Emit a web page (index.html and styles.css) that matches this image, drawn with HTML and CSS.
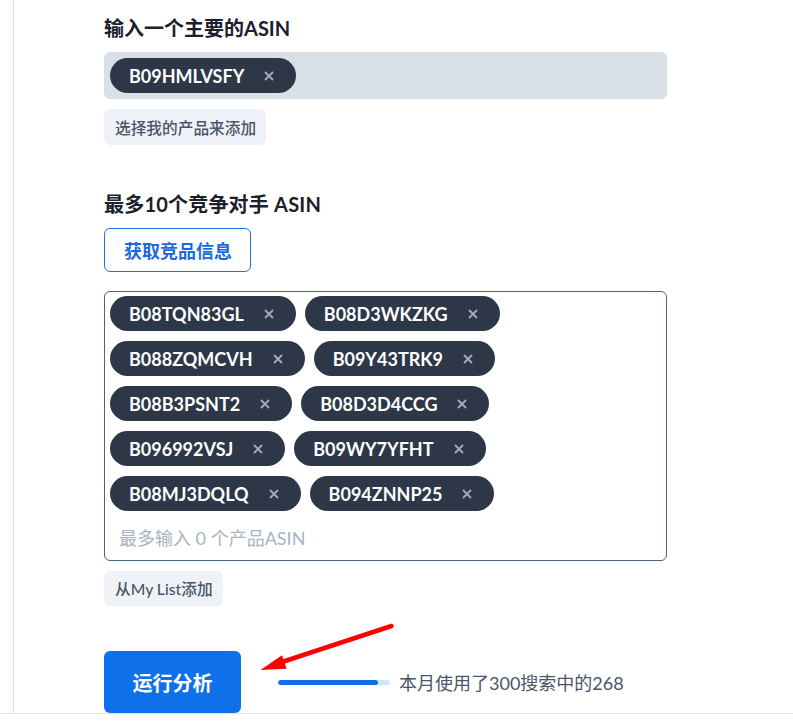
FILE: index.html
```html
<!DOCTYPE html>
<html lang="zh-CN">
<head>
<meta charset="utf-8">
<title>ASIN 分析</title>
<link rel="stylesheet" href="styles.css">
</head>
<body>
<div class="page">
  <div class="panel">
    <section class="field">
      <h2 class="label">输入一个主要的ASIN</h2>
      <div class="main-box">
        <span class="chip">B09HMLVSFY<svg class="x" viewBox="0 0 10 10"><path d="M1 1L9 9M9 1L1 9"/></svg></span>
      </div>
      <button class="ghost">选择我的产品来添加</button>
    </section>

    <section class="field competitors">
      <h2 class="label">最多10个竞争对手 ASIN</h2>
      <button class="outline">获取竞品信息</button>
      <div class="tag-box">
        <span class="chip">B08TQN83GL<svg class="x" viewBox="0 0 10 10"><path d="M1 1L9 9M9 1L1 9"/></svg></span>
        <span class="chip">B08D3WKZKG<svg class="x" viewBox="0 0 10 10"><path d="M1 1L9 9M9 1L1 9"/></svg></span>
        <span class="chip">B088ZQMCVH<svg class="x" viewBox="0 0 10 10"><path d="M1 1L9 9M9 1L1 9"/></svg></span>
        <span class="chip">B09Y43TRK9<svg class="x" viewBox="0 0 10 10"><path d="M1 1L9 9M9 1L1 9"/></svg></span>
        <span class="chip">B08B3PSNT2<svg class="x" viewBox="0 0 10 10"><path d="M1 1L9 9M9 1L1 9"/></svg></span>
        <span class="chip">B08D3D4CCG<svg class="x" viewBox="0 0 10 10"><path d="M1 1L9 9M9 1L1 9"/></svg></span>
        <span class="chip">B096992VSJ<svg class="x" viewBox="0 0 10 10"><path d="M1 1L9 9M9 1L1 9"/></svg></span>
        <span class="chip">B09WY7YFHT<svg class="x" viewBox="0 0 10 10"><path d="M1 1L9 9M9 1L1 9"/></svg></span>
        <span class="chip">B08MJ3DQLQ<svg class="x" viewBox="0 0 10 10"><path d="M1 1L9 9M9 1L1 9"/></svg></span>
        <span class="chip">B094ZNNP25<svg class="x" viewBox="0 0 10 10"><path d="M1 1L9 9M9 1L1 9"/></svg></span>
        <div class="placeholder">最多输入 0 个产品ASIN</div>
      </div>
      <button class="ghost small">从My List添加</button>
    </section>

    <div class="run-row">
      <button class="run">运行分析</button>
      <div class="bar"><div class="fill" style="width:89.3%"></div></div>
      <span class="usage">本月使用了300搜索中的268</span>
    </div>
  </div>

  <svg class="arrow" viewBox="0 0 793 727" width="793" height="727">
    <line x1="391.5" y1="626" x2="282" y2="662" stroke="#ff0000" stroke-width="4.5" stroke-linecap="round"/>
    <polygon points="260.5,670 282,655.2 286.6,668.8" fill="#ff0000"/>
  </svg>
</div>
</body>
</html>
```

FILE: styles.css
```css
* { box-sizing: border-box; }

html, body {
  margin: 0;
  padding: 0;
  background: #ffffff;
}

body {
  font-family: "Lato", "Noto Sans CJK SC", sans-serif;
  color: #1a202c;
}

.page {
  position: relative;
  width: 793px;
  border-bottom: 1px solid #e3e4e8;
}

.panel {
  margin-left: 13px;
  border-left: 1px solid #dcdee4;
  padding: 16px 0 0 90px;
  display: flex;
  flex-direction: column;
}

.field {
  display: flex;
  flex-direction: column;
  align-items: flex-start;
}

.label {
  margin: 0;
  font-size: 20px;
  line-height: 24px;
  font-weight: 700;
  color: #1a202c;
}

.competitors .label {
  letter-spacing: 0.2px;
}

.main-box {
  margin-top: 12px;
  width: 563px;
  min-height: 47px;
  padding: 6px;
  background: #d9dfe6;
  border-radius: 6px;
  display: flex;
}

.chip {
  display: inline-flex;
  align-items: center;
  height: 35px;
  padding: 0 22px 0 19px;
  gap: 20px;
  background: #2d3748;
  color: #ffffff;
  border-radius: 18px;
  font-size: 18px;
  font-weight: 700;
  white-space: nowrap;
}

.x {
  width: 10px;
  height: 10px;
  stroke: #a0aec0;
  stroke-width: 1.8;
  fill: none;
}

.ghost {
  margin-top: 10px;
  height: 36px;
  padding: 0 10px 0 11px;
  border: none;
  border-radius: 6px;
  background: #eff3f7;
  color: #4a5568;
  font-family: inherit;
  font-size: 15.7px;
  font-weight: 500;
}

.ghost.small {
  margin-top: 10px;
  height: 35px;
}

.competitors {
  margin-top: 47px;
}

.outline {
  margin-top: 12px;
  height: 44px;
  padding: 0 18px 0 19px;
  background: #ffffff;
  border: 1px solid #1f75e8;
  border-radius: 6px;
  color: #1a69e0;
  font-family: inherit;
  font-size: 18px;
  font-weight: 700;
}

.tag-box {
  margin-top: 19px;
  width: 563px;
  border: 1px solid #4d6280;
  border-radius: 6px;
  padding: 4px 5px 4px 5px;
  display: flex;
  flex-wrap: wrap;
  column-gap: 9px;
  row-gap: 10px;
}

.placeholder {
  width: 100%;
  height: 36px;
  line-height: 36px;
  margin-top: -1px;
  padding-left: 9px;
  font-size: 18px;
  color: #a8b4c4;
}

.run-row {
  margin-top: 45px;
  display: flex;
  align-items: center;
}

.run {
  width: 137px;
  height: 62px;
  border: none;
  border-radius: 6px;
  background: #0e71ea;
  color: #ffffff;
  font-family: inherit;
  font-size: 20px;
  font-weight: 700;
}

.bar {
  margin-left: 37px;
  width: 112px;
  height: 5px;
  border-radius: 3px;
  background: #cfe6fd;
  overflow: hidden;
}

.fill {
  height: 100%;
  background: #0e6fe6;
  border-radius: 3px;
}

.usage {
  margin-left: 9px;
  font-size: 18px;
  color: #4a5568;
}

.arrow {
  position: absolute;
  left: 0;
  top: 0;
  pointer-events: none;
}
```
